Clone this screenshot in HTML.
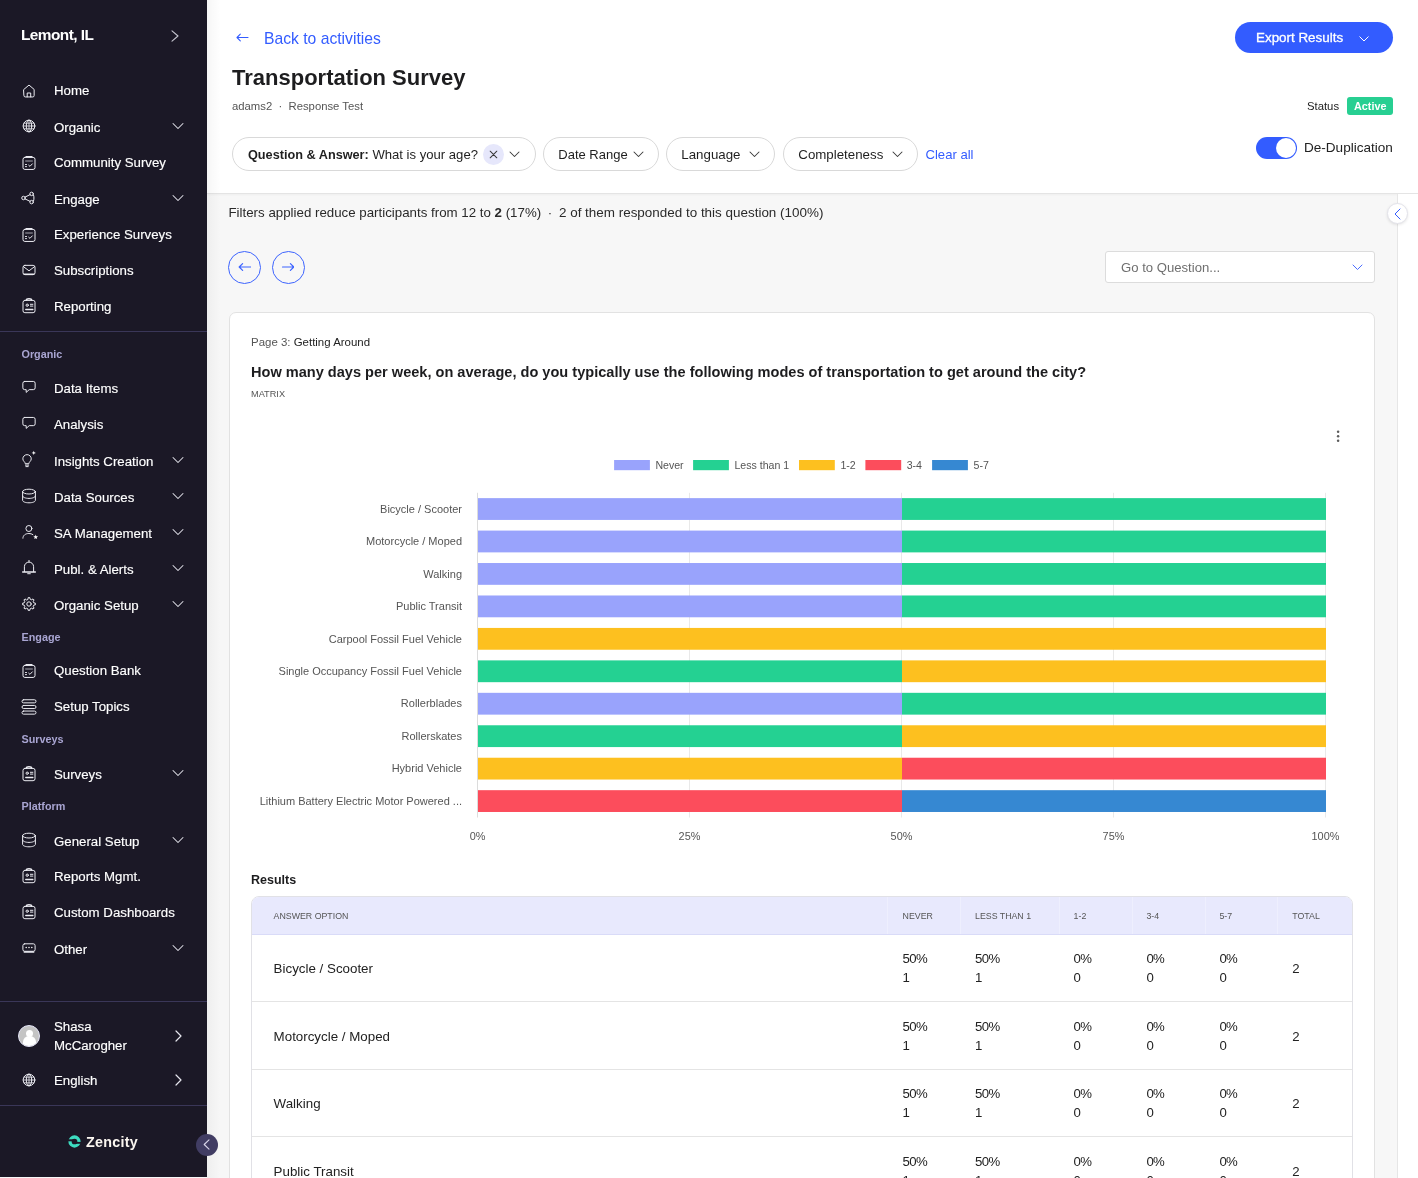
<!DOCTYPE html>
<html lang="en">
<head>
<meta charset="utf-8">
<title>Transportation Survey</title>
<style>
*{box-sizing:border-box;margin:0;padding:0}
html{background:#f7f7f7}
html,body{width:1418px;height:1178px;overflow:hidden;background:#f7f7f7;font-family:"Liberation Sans",sans-serif;color:#1f1f1f}
.abs{position:absolute}
.t{position:absolute;white-space:nowrap;line-height:1}
/* ---------- sidebar ---------- */
body{will-change:transform}
#side{position:absolute;left:0;top:0;width:207px;height:1177px;background:#1b1826;color:#fff;z-index:5}
#side .org{left:21px;top:27px;font-size:15.4px;font-weight:700;letter-spacing:-.55px}
#side .lb{position:absolute;left:54px;-webkit-text-stroke:.15px #fff;font-size:13.25px;line-height:16px;white-space:nowrap}
#side svg.ic{position:absolute;width:16px;height:16px;overflow:visible;stroke:#ececf2;fill:none;stroke-width:1;stroke-linecap:round;stroke-linejoin:round}
#side svg.ch{position:absolute;left:172.2px;width:12px;height:8px;stroke:#e2e2ea;fill:none;stroke-width:1.05;stroke-linecap:round;stroke-linejoin:round}
#side .sec{position:absolute;left:21.5px;font-size:10.8px;font-weight:700;color:#a9a5d2;line-height:12px;white-space:nowrap}
#side .hr{position:absolute;left:0;width:207px;height:1px;background:#3a3658}
/* ---------- header ---------- */
#head{position:absolute;left:207px;top:0;width:1211px;height:193.600px;background:#fff;border-bottom:1px solid #e4e4e4;box-shadow:0 1px 2px rgba(0,0,0,.04)}
.chip{position:absolute;top:137px;height:34px;border:1px solid #d9d9d9;border-radius:17px;background:#fff}
.chip span{position:absolute;top:9px;font-size:13.3px;line-height:15px;white-space:nowrap}
.chip svg{position:absolute;top:13px;width:11px;height:7px;stroke:#3a3a3a;fill:none;stroke-width:1.05;stroke-linecap:round;stroke-linejoin:round}
/* ---------- main ---------- */
#card{position:absolute;left:229px;top:312.300px;width:1146.300px;height:900px;background:#fff;border:1px solid #e2e2e2;border-radius:7px}
</style>
</head>
<body>
<!-- shadow from sidebar -->
<div class="abs" style="left:207px;top:0;width:14px;height:1178px;background:linear-gradient(90deg,rgba(0,0,0,.035),rgba(0,0,0,0));z-index:4;pointer-events:none"></div>

<div id="side">
  <div class="t org">Lemont, IL</div>
  <svg class="abs" style="left:170.700px;top:30px;width:8px;height:12px;stroke:#c6c6d0;fill:none;stroke-width:1.100;stroke-linecap:round;stroke-linejoin:round" viewBox="0 0 8 12"><path d="M1 .8l6 5.200-6 5.200"/></svg>
  <svg class="ic" style="left:21.40px;top:82.60px" viewBox="0 0 16 16"><path d="M2.85 6.45 8 2.05l5.15 4.4v6.1a1.4 1.4 0 0 1-1.4 1.4h-7.5a1.4 1.4 0 0 1-1.4-1.4z"/><path d="M6.2 13.9v-3.9h3.5v3.9"/></svg>
<span class="lb" style="top:83px">Home</span>
<svg class="ic" style="left:20.80px;top:117.80px" viewBox="0 0 16 16"><circle cx="8" cy="8" r="5.85"/><ellipse cx="8" cy="8" rx="2.7" ry="5.85"/><path d="M2.2 8h11.6M3 5.2h10M3 10.8h10M8 2.2v11.6" stroke-width=".8"/></svg>
<span class="lb" style="top:120px">Organic</span>
<svg class="ch" style="top:122.2px" viewBox="0 0 12 8"><path d="M1 1.500l5 5 5-5"/></svg>
<svg class="ic" style="left:20.65px;top:154.60px" viewBox="0 0 16 16"><rect x="2" y="2.4" width="12" height="12.05" rx="1.9"/><path d="M5.2 1.75h5.6" stroke-width="1.7"/><path d="M4.6 6h6.8" stroke-width=".8" opacity=".85"/><path d="M4.5 9.5h1M4.5 11.6h1" stroke-width="1"/><path d="M7.7 10.2l1.25 1.15 2.4-2.5"/></svg>
<span class="lb" style="top:155px">Community Survey</span>
<svg class="ic" style="left:19.90px;top:190.30px" viewBox="0 0 16 16"><circle cx="3.5" cy="8" r="1.75"/><circle cx="11.6" cy="3.9" r="1.75"/><circle cx="11.6" cy="12.1" r="1.75"/><path d="M5 7.1l5-2.4M5 8.9l5 2.4M13.6 5.2c.5.9.5 4.700 0 5.600"/></svg>
<span class="lb" style="top:192px">Engage</span>
<svg class="ch" style="top:194.2px" viewBox="0 0 12 8"><path d="M1 1.500l5 5 5-5"/></svg>
<svg class="ic" style="left:20.65px;top:226.60px" viewBox="0 0 16 16"><rect x="2" y="2.4" width="12" height="12.05" rx="1.9"/><path d="M5.2 1.75h5.6" stroke-width="1.7"/><path d="M4.6 6h6.8" stroke-width=".8" opacity=".85"/><path d="M4.5 9.5h1M4.5 11.6h1" stroke-width="1"/><path d="M7.7 10.2l1.25 1.15 2.4-2.5"/></svg>
<span class="lb" style="top:227px">Experience Surveys</span>
<svg class="ic" style="left:20.50px;top:261.80px" viewBox="0 0 16 16"><rect x="2" y="3.35" width="12" height="9.3" rx="1.9"/><path d="M2.5 4.700 8 8.800l5.500-4.100"/><path d="M3.300 12.300h9.400" stroke-width="1.500"/></svg>
<span class="lb" style="top:263px">Subscriptions</span>
<svg class="ic" style="left:20.50px;top:298.40px" viewBox="0 0 16 16"><rect x="2" y="2.400" width="12" height="12.300" rx="1.900"/><path d="M5.300 2.300a2.700 1.500 0 0 1 5.400 0" stroke-width="1.400"/><circle cx="6.200" cy="7.200" r="1.150"/><path d="M9.400 6.300h2.500M9.400 8.100h2.500" stroke-width="1"/><path d="M4.800 11.600h7" stroke-width="1.500"/></svg>
<span class="lb" style="top:299px">Reporting</span>
<svg class="ic" style="left:20.60px;top:379.00px" viewBox="0 0 16 16"><path d="M3.650 2.450h8.700a1.800 1.800 0 0 1 1.800 1.800v4.600a1.800 1.800 0 0 1-1.800 1.800H8.200L5.200 13.400v-2.750H3.650a1.800 1.800 0 0 1-1.800-1.800v-4.600a1.800 1.800 0 0 1 1.800-1.800z"/></svg>
<span class="lb" style="top:381px">Data Items</span>
<svg class="ic" style="left:20.60px;top:414.80px" viewBox="0 0 16 16"><path d="M3.650 2.450h8.700a1.800 1.800 0 0 1 1.800 1.800v4.600a1.800 1.800 0 0 1-1.800 1.800H8.200L5.200 13.400v-2.750H3.650a1.800 1.800 0 0 1-1.800-1.800v-4.600a1.800 1.800 0 0 1 1.800-1.800z"/></svg>
<span class="lb" style="top:417px">Analysis</span>
<svg class="ic" style="left:20.90px;top:451.00px" viewBox="0 0 16 16"><path d="M4.200 12.300C4.200 10.800 1.850 10.200 1.850 7.850a4.200 4.200 0 0 1 8.400 0c0 2.350-2.350 2.950-2.350 4.450z"/><path d="M4.400 14.100h3.300M4.900 15.600h2.300"/><path d="M12.750-.3l.55 1.650 1.650.55-1.650.55-.55 1.650-.55-1.650-1.650-.55 1.650-.55z" fill="#fff" stroke="none"/></svg>
<span class="lb" style="top:454px">Insights Creation</span>
<svg class="ch" style="top:456.2px" viewBox="0 0 12 8"><path d="M1 1.500l5 5 5-5"/></svg>
<svg class="ic" style="left:20.70px;top:487.90px" viewBox="0 0 16 16"><ellipse cx="8" cy="3.600" rx="6.400" ry="2.400"/><path d="M1.600 3.600v8.800c0 1.330 2.870 2.400 6.400 2.400s6.400-1.070 6.400-2.400V3.600"/><path d="M1.600 8c0 1.330 2.870 2.400 6.400 2.400s6.400-1.070 6.400-2.400"/></svg>
<span class="lb" style="top:490px">Data Sources</span>
<svg class="ch" style="top:492.2px" viewBox="0 0 12 8"><path d="M1 1.500l5 5 5-5"/></svg>
<svg class="ic" style="left:22.00px;top:523.90px" viewBox="0 0 16 16"><circle cx="6.900" cy="4.500" r="3"/><path d="M.9 14.200c0-2.900 2.600-4.700 6-4.700 1.600 0 3 .400 4 1.100"/><path d="M13.70 10.60 L14.32 12.25 L16.08 12.33 L14.70 13.42 L15.17 15.12 L13.70 14.15 L12.23 15.12 L12.70 13.42 L11.32 12.33 L13.08 12.25Z" fill="#fff" stroke="none"/></svg>
<span class="lb" style="top:526px">SA Management</span>
<svg class="ch" style="top:528.2px" viewBox="0 0 12 8"><path d="M1 1.500l5 5 5-5"/></svg>
<svg class="ic" style="left:20.70px;top:559.00px" viewBox="0 0 16 16"><path d="M8 1.400v1.400"/><path d="M3.400 12.600V7.700a4.600 4.600 0 0 1 9.200 0v4.900"/><path d="M1.700 12.900h12.600" stroke-width="1.500"/><path d="M6.700 14.700h2.600"/></svg>
<span class="lb" style="top:562px">Publ. &amp; Alerts</span>
<svg class="ch" style="top:564.2px" viewBox="0 0 12 8"><path d="M1 1.500l5 5 5-5"/></svg>
<svg class="ic" style="left:20.80px;top:595.80px" viewBox="0 0 16 16"><circle cx="8" cy="8" r="2.200"/><path d="M6.95 3.11 L7.24 1.55 L8.76 1.55 L9.05 3.11 L10.71 3.80 L12.02 2.90 L13.10 3.98 L12.20 5.29 L12.89 6.95 L14.45 7.24 L14.45 8.76 L12.89 9.05 L12.20 10.71 L13.10 12.02 L12.02 13.10 L10.71 12.20 L9.05 12.89 L8.76 14.45 L7.24 14.45 L6.95 12.89 L5.29 12.20 L3.98 13.10 L2.90 12.02 L3.80 10.71 L3.11 9.05 L1.55 8.76 L1.55 7.24 L3.11 6.95 L3.80 5.29 L2.90 3.98 L3.98 2.90 L5.29 3.80Z"/></svg>
<span class="lb" style="top:598px">Organic Setup</span>
<svg class="ch" style="top:600.2px" viewBox="0 0 12 8"><path d="M1 1.500l5 5 5-5"/></svg>
<svg class="ic" style="left:20.70px;top:663.00px" viewBox="0 0 16 16"><rect x="2" y="2.4" width="12" height="12.05" rx="1.9"/><path d="M5.2 1.75h5.6" stroke-width="1.7"/><path d="M4.6 6h6.8" stroke-width=".8" opacity=".85"/><path d="M4.5 9.5h1M4.5 11.6h1" stroke-width="1"/><path d="M7.7 10.2l1.25 1.15 2.4-2.5"/></svg>
<span class="lb" style="top:663px">Question Bank</span>
<svg class="ic" style="left:20.70px;top:698.50px" viewBox="0 0 16 16"><rect x="1" y=".750" width="14" height="3.100" rx="1.550"/><rect x="1" y="6.450" width="14" height="3.100" rx="1.550"/><rect x="1" y="12.050" width="14" height="3.100" rx="1.550"/></svg>
<span class="lb" style="top:699px">Setup Topics</span>
<svg class="ic" style="left:20.70px;top:765.60px" viewBox="0 0 16 16"><rect x="2" y="2.400" width="12" height="12.300" rx="1.900"/><path d="M5.300 2.300a2.700 1.500 0 0 1 5.400 0" stroke-width="1.400"/><circle cx="6.200" cy="7.200" r="1.150"/><path d="M9.400 6.300h2.500M9.400 8.100h2.500" stroke-width="1"/><path d="M4.800 11.600h7" stroke-width="1.500"/></svg>
<span class="lb" style="top:767px">Surveys</span>
<svg class="ch" style="top:769.2px" viewBox="0 0 12 8"><path d="M1 1.500l5 5 5-5"/></svg>
<svg class="ic" style="left:20.80px;top:831.80px" viewBox="0 0 16 16"><ellipse cx="8" cy="3.600" rx="6.400" ry="2.400"/><path d="M1.600 3.600v8.800c0 1.330 2.870 2.400 6.400 2.400s6.400-1.070 6.400-2.400V3.600"/><path d="M1.600 8c0 1.330 2.870 2.400 6.400 2.400s6.400-1.070 6.400-2.400"/></svg>
<span class="lb" style="top:834px">General Setup</span>
<svg class="ch" style="top:836.2px" viewBox="0 0 12 8"><path d="M1 1.500l5 5 5-5"/></svg>
<svg class="ic" style="left:20.70px;top:868.00px" viewBox="0 0 16 16"><rect x="2" y="2.400" width="12" height="12.300" rx="1.900"/><path d="M5.300 2.300a2.700 1.500 0 0 1 5.400 0" stroke-width="1.400"/><circle cx="6.200" cy="7.200" r="1.150"/><path d="M9.400 6.300h2.500M9.400 8.100h2.500" stroke-width="1"/><path d="M4.800 11.600h7" stroke-width="1.500"/></svg>
<span class="lb" style="top:869px">Reports Mgmt.</span>
<svg class="ic" style="left:20.70px;top:904.10px" viewBox="0 0 16 16"><rect x="2" y="2.400" width="12" height="12.300" rx="1.900"/><path d="M5.300 2.300a2.700 1.500 0 0 1 5.400 0" stroke-width="1.400"/><circle cx="6.200" cy="7.200" r="1.150"/><path d="M9.400 6.300h2.500M9.400 8.100h2.500" stroke-width="1"/><path d="M4.800 11.600h7" stroke-width="1.500"/></svg>
<span class="lb" style="top:905px">Custom Dashboards</span>
<svg class="ic" style="left:20.70px;top:939.80px" viewBox="0 0 16 16"><rect x="1.900" y="3.800" width="12.200" height="7.500" rx="1.800"/><circle cx="5.200" cy="7.500" r=".750" fill="#fff" stroke="none"/><circle cx="8" cy="7.500" r=".750" fill="#fff" stroke="none"/><circle cx="10.800" cy="7.500" r=".750" fill="#fff" stroke="none"/><path d="M3.200 12h9.600" stroke-width="1.300"/></svg>
<span class="lb" style="top:942px">Other</span>
<svg class="ch" style="top:944.2px" viewBox="0 0 12 8"><path d="M1 1.500l5 5 5-5"/></svg>
<div class="sec" style="top:347.5px">Organic</div>
<div class="sec" style="top:630.8px">Engage</div>
<div class="sec" style="top:732.9px">Surveys</div>
<div class="sec" style="top:799.8px">Platform</div>
<div class="hr" style="top:331px"></div>
<div class="hr" style="top:1001px"></div>
<div class="hr" style="top:1105px"></div>
<div class="abs" style="left:18px;top:1024.500px;width:22px;height:22px;border-radius:50%;background:#c4c4c4;border:1px solid #e4e4f6;overflow:hidden"><div class="abs" style="left:6.500px;top:4px;width:7px;height:7px;border-radius:50%;background:#fff"></div><div class="abs" style="left:3.500px;top:10.800px;width:13px;height:12px;border-radius:6px 6px 0 0;background:#fff"></div></div>
<div class="t" style="left:54px;top:1017px;font-size:13.25px;line-height:19px;-webkit-text-stroke:.15px #fff">Shasa<br>McCarogher</div>
<svg class="abs" style="left:175px;top:1030px;width:7px;height:12px;stroke:#e6e6ee;fill:none;stroke-width:1.2;stroke-linecap:round;stroke-linejoin:round" viewBox="0 0 7 12"><path d="M1 1l5 5-5 5"/></svg>
<svg class="ic" style="left:20.700px;top:1072px" viewBox="0 0 16 16"><circle cx="8" cy="8" r="5.85"/><ellipse cx="8" cy="8" rx="2.7" ry="5.85"/><path d="M2.2 8h11.6M3 5.2h10M3 10.8h10M8 2.2v11.6" stroke-width=".8"/></svg>
<div class="t" style="left:54px;top:1073px;font-size:13.25px;line-height:16px;-webkit-text-stroke:.15px #fff">English</div>
<svg class="abs" style="left:175px;top:1074px;width:7px;height:12px;stroke:#e6e6ee;fill:none;stroke-width:1.2;stroke-linecap:round;stroke-linejoin:round" viewBox="0 0 7 12"><path d="M1 1l5 5-5 5"/></svg>
<svg class="abs" style="left:68.100px;top:1135px;width:13px;height:13px" viewBox="0 0 13 13"><circle cx="6.500" cy="6.500" r="4.500" fill="none" stroke="#3ddbc0" stroke-width="3.300"/><rect x="0" y="4.300" width="7.800" height="2" fill="#1b1826"/><rect x="6.300" y="6.900" width="7" height="1.900" fill="#1b1826"/></svg>
<div class="t" style="left:86px;top:1134px;font-size:14.300px;line-height:16px;font-weight:700;letter-spacing:.270px;color:#fbf6f0">Zencity</div>
<div class="abs" style="left:196px;top:1133.700px;width:22px;height:22px;border-radius:50%;background:#413d63"><svg class="abs" style="left:7px;top:5.500px;width:7px;height:11px;stroke:#d9d6ea;fill:none;stroke-width:1.100;stroke-linecap:round;stroke-linejoin:round" viewBox="0 0 7 11"><path d="M6 .8L1.200 5.500 6 10.200"/></svg></div>
</div>

<div id="head">
  <!-- coordinates inside #head are relative to x=207 -->
  <svg class="abs" style="left:29px;top:33px;width:13px;height:9px;stroke:#335cff;fill:none;stroke-width:1.1;stroke-linecap:round;stroke-linejoin:round" viewBox="0 0 13 9"><path d="M12 4.500H1M4.300 1.200L1 4.500l3.300 3.300"/></svg>
  <div class="t" style="left:57px;top:30px;font-size:15.700px;line-height:17px;color:#335cff">Back to activities</div>
  <div class="t" style="left:25px;top:65px;font-size:22px;line-height:26px;font-weight:700;color:#1d1d1f;letter-spacing:0">Transportation Survey</div>
  <div class="t" style="left:25px;top:100px;font-size:11.300px;line-height:13px;color:#555">adams2 &nbsp;·&nbsp; Response Test</div>

  <div class="chip" style="left:25px;width:304px">
    <span style="left:15px;font-size:13.1px"><b style="font-size:12.7px">Question &amp; Answer:</b> What is your age?</span>
    <div class="abs" style="left:250px;top:6px;width:21px;height:21px;border-radius:50%;background:#e6e7fb"></div>
    <svg style="left:256px;top:12px;width:9px;height:9px" viewBox="0 0 9 9"><path d="M1.200 1.200l6.600 6.600M7.800 1.200L1.200 7.800"/></svg>
    <svg style="left:276px" viewBox="0 0 11 7"><path d="M1 1l4.500 4.500L10 1"/></svg>
  </div>
  <div class="chip" style="left:336px;width:116px"><span style="left:14.300px;font-size:13px">Date Range</span><svg style="left:89px" viewBox="0 0 11 7"><path d="M1 1l4.500 4.500L10 1"/></svg></div>
  <div class="chip" style="left:459px;width:109px"><span style="left:14.300px">Language</span><svg style="left:82px" viewBox="0 0 11 7"><path d="M1 1l4.500 4.500L10 1"/></svg></div>
  <div class="chip" style="left:576px;width:135px"><span style="left:14.300px">Completeness</span><svg style="left:108px" viewBox="0 0 11 7"><path d="M1 1l4.500 4.500L10 1"/></svg></div>
  <div class="t" style="left:718.500px;top:147px;font-size:13.100px;line-height:15px;color:#335cff">Clear all</div>

  <div class="abs" style="left:1028.100px;top:22.300px;width:158px;height:31px;border-radius:15.500px;background:#335cff"></div>
  <div class="t" style="left:1049px;top:30px;font-size:13.400px;line-height:15px;color:#fff;font-weight:400;-webkit-text-stroke:.3px #fff">Export Results</div>
  <svg class="abs" style="left:1152px;top:35.500px;width:10px;height:6px;stroke:#fff;fill:none;stroke-width:1;stroke-linecap:round;stroke-linejoin:round" viewBox="0 0 10 6"><path d="M.8.800L5 5 9.200.8"/></svg>

  <div class="t" style="left:1100px;top:100px;font-size:11.300px;line-height:13px;color:#222">Status</div>
  <div class="abs" style="left:1139.800px;top:97.200px;width:46.300px;height:17.800px;border-radius:3px;background:#27cf92"></div>
  <div class="t" style="left:1147px;top:100px;font-size:10.800px;line-height:13px;color:#fff;font-weight:700">Active</div>

  <div class="abs" style="left:1049px;top:136.800px;width:41.200px;height:22px;border-radius:11px;background:#335cff"></div>
  <div class="abs" style="left:1069.400px;top:137.800px;width:20px;height:20px;border-radius:50%;background:#fff"></div>
  <div class="t" style="left:1097px;top:140px;font-size:13.550px;line-height:15px;color:#222">De-Duplication</div>

</div>

<div class="abs" style="left:1397.400px;top:194px;width:21px;height:984px;background:#fff;border-left:1px solid #e6e6e6"></div>
<div class="abs" style="left:1387.400px;top:203.300px;width:21px;height:21px;border-radius:50%;background:#fff;border:1px solid #e3e3ea;box-shadow:0 1px 3px rgba(0,0,0,.10)"><svg class="abs" style="left:5.300px;top:3.500px;width:7px;height:12px;stroke:#335cff;fill:none;stroke-width:1;stroke-linecap:round;stroke-linejoin:round" viewBox="0 0 7 12"><path d="M6 1L1 6l5 5"/></svg></div>
<div class="t" style="left:228.500px;top:205px;font-size:13.300px;line-height:15px;color:#2a2a2a">Filters applied reduce participants from 12 to <b>2</b> (17%)<span style="display:inline-block;width:17.800px;text-align:center">·</span><span style="font-size:13.450px">2 of them responded to this question (100%)</span></div>
<div class="abs" style="left:228.3px;top:250.500px;width:33px;height:33px;border-radius:50%;border:1.100px solid #3d64ff;background:transparent"><svg class="abs" style="left:8.400px;top:10.500px;width:13.500px;height:10px;stroke:#3d64ff;fill:none;stroke-width:1.200;stroke-linecap:round;stroke-linejoin:round" viewBox="0 0 13.500 10"><path d="M12.500 5H1.200M4.600 1.600L1.200 5l3.400 3.400"/></svg></div>
<div class="abs" style="left:271.6px;top:250.500px;width:33px;height:33px;border-radius:50%;border:1.100px solid #3d64ff;background:transparent"><svg class="abs" style="left:8.400px;top:10.500px;width:13.500px;height:10px;stroke:#3d64ff;fill:none;stroke-width:1.200;stroke-linecap:round;stroke-linejoin:round" viewBox="0 0 13.500 10"><path d="M1.500 5H12.800M9.400 1.600L12.800 5 9.400 8.400"/></svg></div>
<div class="abs" style="left:1105px;top:251px;width:270px;height:32px;border:1px solid #dcdcdc;border-radius:3px;background:#fff"><div class="t" style="left:15px;top:8px;font-size:13.140px;line-height:15px;color:#6f6f6f">Go to Question...</div><svg class="abs" style="left:246px;top:12px;width:11px;height:7px;stroke:#4a6cff;fill:none;stroke-width:1;stroke-linecap:round;stroke-linejoin:round" viewBox="0 0 11 7"><path d="M1 1l4.500 4.500L10 1"/></svg></div>
<div id="card">
<div class="t" style="left:21px;top:22.69999999999999px;font-size:11.460px;line-height:13px;color:#555">Page 3: <span style="color:#222">Getting Around</span></div>
<div class="t" style="left:21px;top:50.69999999999999px;font-size:14.570px;line-height:17px;font-weight:700;color:#1d1d1f">How many days per week, on average, do you typically use the following modes of transportation to get around the city?</div>
<div class="t" style="left:21px;top:75.69999999999999px;font-size:9.200px;line-height:10px;color:#555;letter-spacing:0">MATRIX</div>
<svg class="abs" style="left:1103.0px;top:114.70px;width:10px;height:17px" viewBox="0 0 10 17"><circle cx="5.100" cy="3.700" r="1.250" fill="#5c5c5c"/><circle cx="5.100" cy="8.300" r="1.250" fill="#5c5c5c"/><circle cx="5.100" cy="12.850" r="1.250" fill="#5c5c5c"/></svg>
<svg class="abs" style="left:0px;top:126.69999999999999px;width:1146px;height:420px" viewBox="230 440 1146 420" font-family="Liberation Sans, sans-serif" font-size="11" fill="#555">
<rect x="614.1" y="460" width="35.800" height="10.200" fill="#99a3fc"/><text x="655.4" y="469" font-size="10.600">Never</text>
<rect x="693.1" y="460" width="35.800" height="10.200" fill="#24d192"/><text x="734.4" y="469" font-size="10.600">Less than 1</text>
<rect x="799.0" y="460" width="35.800" height="10.200" fill="#fdc01f"/><text x="840.4" y="469" font-size="10.600">1-2</text>
<rect x="865.4" y="460" width="35.800" height="10.200" fill="#fc4d5c"/><text x="906.7" y="469" font-size="10.600">3-4</text>
<rect x="932.1" y="460" width="35.800" height="10.200" fill="#3688d2"/><text x="973.6" y="469" font-size="10.600">5-7</text>
<rect x="477.0" y="492.8" width="1" height="324.7" fill="#dcdcdc"/>
<text x="477.5" y="840" text-anchor="middle" font-size="10.900">0%</text>
<rect x="689.0" y="492.8" width="1" height="324.7" fill="#e9e9e9"/>
<text x="689.5" y="840" text-anchor="middle" font-size="10.900">25%</text>
<rect x="901.0" y="492.8" width="1" height="324.7" fill="#e9e9e9"/>
<text x="901.5" y="840" text-anchor="middle" font-size="10.900">50%</text>
<rect x="1113.0" y="492.8" width="1" height="324.7" fill="#e9e9e9"/>
<text x="1113.5" y="840" text-anchor="middle" font-size="10.900">75%</text>
<rect x="1325.0" y="492.8" width="1" height="324.7" fill="#e9e9e9"/>
<text x="1325.5" y="840" text-anchor="middle" font-size="10.900">100%</text>
<rect x="478.0" y="498.13" width="424.0" height="21.8" fill="#99a3fc"/>
<rect x="902.0" y="498.13" width="424.0" height="21.8" fill="#24d192"/>
<text x="462" y="512.73" text-anchor="end">Bicycle / Scooter</text>
<rect x="478.0" y="530.58" width="424.0" height="21.8" fill="#99a3fc"/>
<rect x="902.0" y="530.58" width="424.0" height="21.8" fill="#24d192"/>
<text x="462" y="545.18" text-anchor="end">Motorcycle / Moped</text>
<rect x="478.0" y="563.02" width="424.0" height="21.8" fill="#99a3fc"/>
<rect x="902.0" y="563.02" width="424.0" height="21.8" fill="#24d192"/>
<text x="462" y="577.62" text-anchor="end">Walking</text>
<rect x="478.0" y="595.48" width="424.0" height="21.8" fill="#99a3fc"/>
<rect x="902.0" y="595.48" width="424.0" height="21.8" fill="#24d192"/>
<text x="462" y="610.08" text-anchor="end">Public Transit</text>
<rect x="478.0" y="627.93" width="424.0" height="21.8" fill="#fdc01f"/>
<rect x="902.0" y="627.93" width="424.0" height="21.8" fill="#fdc01f"/>
<text x="462" y="642.53" text-anchor="end">Carpool Fossil Fuel Vehicle</text>
<rect x="478.0" y="660.38" width="424.0" height="21.8" fill="#24d192"/>
<rect x="902.0" y="660.38" width="424.0" height="21.8" fill="#fdc01f"/>
<text x="462" y="674.98" text-anchor="end">Single Occupancy Fossil Fuel Vehicle</text>
<rect x="478.0" y="692.83" width="424.0" height="21.8" fill="#99a3fc"/>
<rect x="902.0" y="692.83" width="424.0" height="21.8" fill="#24d192"/>
<text x="462" y="707.43" text-anchor="end">Rollerblades</text>
<rect x="478.0" y="725.27" width="424.0" height="21.8" fill="#24d192"/>
<rect x="902.0" y="725.27" width="424.0" height="21.8" fill="#fdc01f"/>
<text x="462" y="739.88" text-anchor="end">Rollerskates</text>
<rect x="478.0" y="757.73" width="424.0" height="21.8" fill="#fdc01f"/>
<rect x="902.0" y="757.73" width="424.0" height="21.8" fill="#fc4d5c"/>
<text x="462" y="772.33" text-anchor="end">Hybrid Vehicle</text>
<rect x="478.0" y="790.18" width="424.0" height="21.8" fill="#fc4d5c"/>
<rect x="902.0" y="790.18" width="424.0" height="21.8" fill="#3688d2"/>
<text x="462" y="804.78" text-anchor="end">Lithium Battery Electric Motor Powered ...</text>
</svg>
<div class="t" style="left:21px;top:559.5px;font-size:12.500px;line-height:15px;font-weight:700;color:#1d1d1f">Results</div>
<div class="abs" style="left:21px;top:582.7px;width:1102px;height:400px;border:1px solid #e1e1e6;border-radius:8px 8px 0 0;background:#fff;overflow:hidden">
<div class="abs" style="left:0;top:0;width:1100px;height:37.700px;background:#e8e9fd;border-bottom:1px solid #d9dbf8"></div>
<div class="t" style="left:21.600000000000023px;top:13.700000000000045px;font-size:8.800px;line-height:10px;color:#555">ANSWER OPTION</div>
<div class="t" style="left:650.6px;top:13.700000000000045px;font-size:8.800px;line-height:10px;color:#555">NEVER</div>
<div class="t" style="left:723px;top:13.700000000000045px;font-size:8.800px;line-height:10px;color:#555">LESS THAN 1</div>
<div class="t" style="left:821.5999999999999px;top:13.700000000000045px;font-size:8.800px;line-height:10px;color:#555">1-2</div>
<div class="t" style="left:894.4000000000001px;top:13.700000000000045px;font-size:8.800px;line-height:10px;color:#555">3-4</div>
<div class="t" style="left:967.4000000000001px;top:13.700000000000045px;font-size:8.800px;line-height:10px;color:#555">5-7</div>
<div class="t" style="left:1040.3px;top:13.700000000000045px;font-size:8.800px;line-height:10px;color:#555">TOTAL</div>
<div class="abs" style="left:635px;top:0;width:1px;height:37px;background:#eeeffe"></div>
<div class="abs" style="left:708px;top:0;width:1px;height:37px;background:#eeeffe"></div>
<div class="abs" style="left:807px;top:0;width:1px;height:37px;background:#eeeffe"></div>
<div class="abs" style="left:880px;top:0;width:1px;height:37px;background:#eeeffe"></div>
<div class="abs" style="left:953px;top:0;width:1px;height:37px;background:#eeeffe"></div>
<div class="abs" style="left:1025px;top:0;width:1px;height:37px;background:#eeeffe"></div>
<div class="t" style="left:21.600000000000023px;top:64.17px;font-size:13.350px;line-height:15px;color:#222">Bicycle / Scooter</div>
<div class="t" style="left:650.6px;top:52.22px;font-size:13.200px;letter-spacing:-0.600px;line-height:19px;color:#222">50%<br>1</div>
<div class="t" style="left:723px;top:52.22px;font-size:13.200px;letter-spacing:-0.600px;line-height:19px;color:#222">50%<br>1</div>
<div class="t" style="left:821.5999999999999px;top:52.22px;font-size:13.200px;letter-spacing:-0.600px;line-height:19px;color:#222">0%<br>0</div>
<div class="t" style="left:894.4000000000001px;top:52.22px;font-size:13.200px;letter-spacing:-0.600px;line-height:19px;color:#222">0%<br>0</div>
<div class="t" style="left:967.4000000000001px;top:52.22px;font-size:13.200px;letter-spacing:-0.600px;line-height:19px;color:#222">0%<br>0</div>
<div class="t" style="left:1040.3px;top:64.22px;font-size:13.200px;line-height:15px;color:#222">2</div>
<div class="abs" style="left:0;top:104.0px;width:1100px;height:1px;background:#e4e4e4"></div>
<div class="t" style="left:21.600000000000023px;top:132.17px;font-size:13.350px;line-height:15px;color:#222">Motorcycle / Moped</div>
<div class="t" style="left:650.6px;top:120.22px;font-size:13.200px;letter-spacing:-0.600px;line-height:19px;color:#222">50%<br>1</div>
<div class="t" style="left:723px;top:120.22px;font-size:13.200px;letter-spacing:-0.600px;line-height:19px;color:#222">50%<br>1</div>
<div class="t" style="left:821.5999999999999px;top:120.22px;font-size:13.200px;letter-spacing:-0.600px;line-height:19px;color:#222">0%<br>0</div>
<div class="t" style="left:894.4000000000001px;top:120.22px;font-size:13.200px;letter-spacing:-0.600px;line-height:19px;color:#222">0%<br>0</div>
<div class="t" style="left:967.4000000000001px;top:120.22px;font-size:13.200px;letter-spacing:-0.600px;line-height:19px;color:#222">0%<br>0</div>
<div class="t" style="left:1040.3px;top:132.22px;font-size:13.200px;line-height:15px;color:#222">2</div>
<div class="abs" style="left:0;top:171.8px;width:1100px;height:1px;background:#e4e4e4"></div>
<div class="t" style="left:21.600000000000023px;top:199.17px;font-size:13.350px;line-height:15px;color:#222">Walking</div>
<div class="t" style="left:650.6px;top:187.22px;font-size:13.200px;letter-spacing:-0.600px;line-height:19px;color:#222">50%<br>1</div>
<div class="t" style="left:723px;top:187.22px;font-size:13.200px;letter-spacing:-0.600px;line-height:19px;color:#222">50%<br>1</div>
<div class="t" style="left:821.5999999999999px;top:187.22px;font-size:13.200px;letter-spacing:-0.600px;line-height:19px;color:#222">0%<br>0</div>
<div class="t" style="left:894.4000000000001px;top:187.22px;font-size:13.200px;letter-spacing:-0.600px;line-height:19px;color:#222">0%<br>0</div>
<div class="t" style="left:967.4000000000001px;top:187.22px;font-size:13.200px;letter-spacing:-0.600px;line-height:19px;color:#222">0%<br>0</div>
<div class="t" style="left:1040.3px;top:199.22px;font-size:13.200px;line-height:15px;color:#222">2</div>
<div class="abs" style="left:0;top:239.0px;width:1100px;height:1px;background:#e4e4e4"></div>
<div class="t" style="left:21.600000000000023px;top:267.17px;font-size:13.350px;line-height:15px;color:#222">Public Transit</div>
<div class="t" style="left:650.6px;top:255.22px;font-size:13.200px;letter-spacing:-0.600px;line-height:19px;color:#222">50%<br>1</div>
<div class="t" style="left:723px;top:255.22px;font-size:13.200px;letter-spacing:-0.600px;line-height:19px;color:#222">50%<br>1</div>
<div class="t" style="left:821.5999999999999px;top:255.22px;font-size:13.200px;letter-spacing:-0.600px;line-height:19px;color:#222">0%<br>0</div>
<div class="t" style="left:894.4000000000001px;top:255.22px;font-size:13.200px;letter-spacing:-0.600px;line-height:19px;color:#222">0%<br>0</div>
<div class="t" style="left:967.4000000000001px;top:255.22px;font-size:13.200px;letter-spacing:-0.600px;line-height:19px;color:#222">0%<br>0</div>
<div class="t" style="left:1040.3px;top:267.22px;font-size:13.200px;line-height:15px;color:#222">2</div>
<div class="abs" style="left:0;top:306.8px;width:1100px;height:1px;background:#e4e4e4"></div>
</div>
</div>
</body>
</html>
